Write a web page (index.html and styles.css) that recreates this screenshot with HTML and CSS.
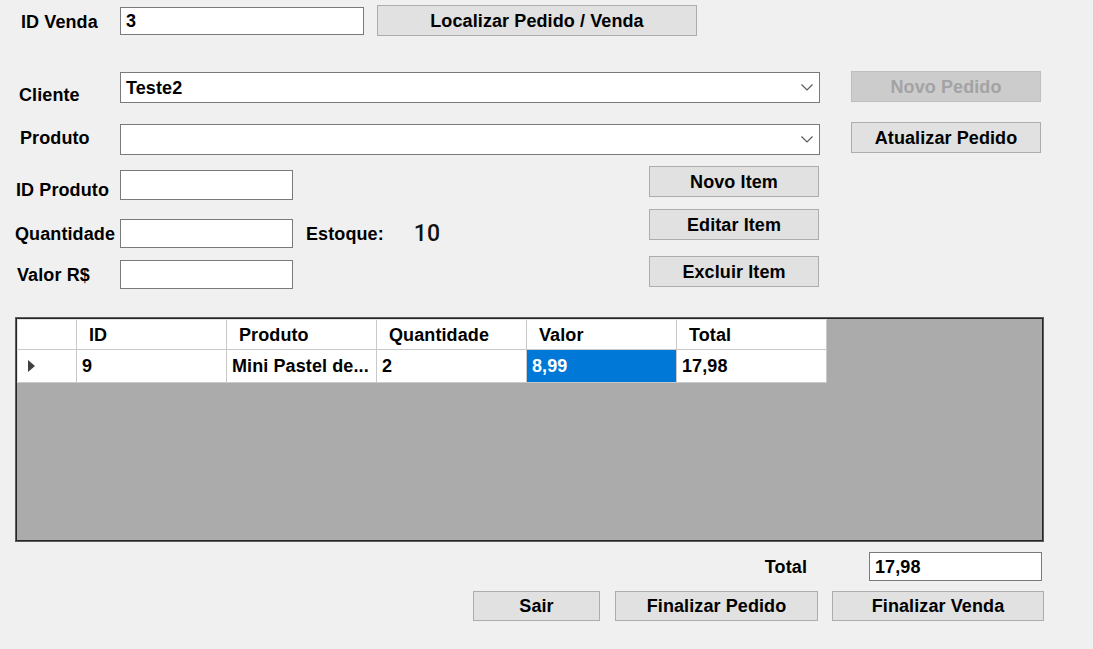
FILE: index.html
```html
<!DOCTYPE html>
<html lang="pt-BR">
<head>
<meta charset="utf-8">
<title>Pedido / Venda</title>
<link rel="stylesheet" href="styles.css">
</head>
<body>
<div class="form">
  <div class="row row-venda">
    <span class="lbl lbl-venda">ID Venda</span>
    <div class="tb tb-venda">3</div>
    <button class="btn btn-localizar">Localizar Pedido / Venda</button>
  </div>

  <div class="row row-cliente">
    <span class="lbl lbl-cliente">Cliente</span>
    <div class="combo combo-cliente">
      <span class="combo-text">Teste2</span>
      <svg class="chev" viewBox="0 0 12 7" width="12" height="7"><polyline points="0.5,0.5 6,6 11.5,0.5" fill="none" stroke="#5a5a5a" stroke-width="1.2"/></svg>
    </div>
    <button class="btn btn-side" disabled>Novo Pedido</button>
  </div>

  <div class="row row-produto">
    <span class="lbl lbl-produto">Produto</span>
    <div class="combo combo-produto">
      <span class="combo-text"></span>
      <svg class="chev" viewBox="0 0 12 7" width="12" height="7"><polyline points="0.5,0.5 6,6 11.5,0.5" fill="none" stroke="#5a5a5a" stroke-width="1.2"/></svg>
    </div>
    <button class="btn btn-side">Atualizar Pedido</button>
  </div>

  <div class="mid">
    <div class="fields">
      <div class="field f-idprod">
        <span class="lbl lbl-idprod">ID Produto</span>
        <div class="tb tb-small tb-idprod"></div>
      </div>
      <div class="field f-qtd">
        <span class="lbl lbl-qtd">Quantidade</span>
        <div class="tb tb-small"></div>
        <span class="estoque">Estoque:</span>
        <span class="estoque-val">10</span>
      </div>
      <div class="field f-valor">
        <span class="lbl lbl-valor">Valor R$</span>
        <div class="tb tb-small"></div>
      </div>
    </div>
    <div class="item-btns">
      <button class="btn btn-item">Novo Item</button>
      <button class="btn btn-item btn-editar">Editar Item</button>
      <button class="btn btn-item btn-excluir">Excluir Item</button>
    </div>
  </div>

  <div class="grid">
    <table class="dgv">
      <thead>
        <tr>
          <th class="rh"></th>
          <th class="col">ID</th>
          <th class="col">Produto</th>
          <th class="col">Quantidade</th>
          <th class="col">Valor</th>
          <th class="col">Total</th>
        </tr>
      </thead>
      <tbody>
        <tr>
          <td class="rh"><span class="arrow"></span></td>
          <td>9</td>
          <td>Mini Pastel de...</td>
          <td>2</td>
          <td class="sel">8,99</td>
          <td>17,98</td>
        </tr>
      </tbody>
    </table>
  </div>

  <div class="total-row">
    <span class="total-lbl">Total</span>
    <div class="tb tb-total">17,98</div>
  </div>

  <div class="actions">
    <button class="btn btn-sair">Sair</button>
    <button class="btn btn-fped">Finalizar Pedido</button>
    <button class="btn btn-fvenda">Finalizar Venda</button>
  </div>
</div>
</body>
</html>
```

FILE: styles.css
```css
* { box-sizing: border-box; }

body {
  margin: 0;
  width: 1093px;
  height: 649px;
  overflow: hidden;
  background: #f0f0f0;
  font-family: "Liberation Sans", Arial, sans-serif;
  font-weight: 700;
  font-size: 18px;
  letter-spacing: 0.1px;
  color: #000;
}

.row { display: flex; align-items: flex-start; }

.lbl {
  width: 120px;
  flex: none;
  line-height: 20px;
  white-space: nowrap;
}

.tb {
  background: #fff;
  border: 1px solid #7a7a7a;
  padding-left: 5px;
  display: flex;
  align-items: center;
  line-height: 20px;
  flex: none;
}

.btn {
  font: inherit;
  letter-spacing: inherit;
  color: #000;
  background: #e1e1e1;
  border: 1px solid #adadad;
  padding: 0;
  margin: 0;
  display: flex;
  align-items: center;
  justify-content: center;
  flex: none;
  line-height: 20px;
}
.btn:disabled {
  background: #cccccc;
  border-color: #bfbfbf;
  color: #a3a3a3;
}

/* Row 1 */
.row-venda { padding-top: 5px; height: 36px; }
.lbl-venda { padding-left: 21px; margin-top: 7px; }
.tb-venda { width: 244px; height: 28px; margin-top: 2px; }
.btn-localizar { width: 320px; height: 31px; margin-left: 13px; }

/* Combo rows */
.combo {
  width: 700px;
  height: 31px;
  background: #fff;
  border: 1px solid #7a7a7a;
  display: flex;
  align-items: center;
  padding: 0 6px 0 5px;
  flex: none;
  line-height: 20px;
}
.combo-text { flex: 1; }
.chev { display: block; flex: none; }

.btn-side { width: 190px; height: 31px; margin-left: 31px; }

.row-cliente { margin-top: 35px; height: 32px; }
.lbl-cliente { padding-left: 19px; margin-top: 14px; }
.combo-cliente { margin-top: 1px; }

.row-produto { margin-top: 19px; height: 33px; }
.lbl-produto { padding-left: 20px; margin-top: 6px; }
.combo-produto { margin-top: 2px; }

/* Middle section */
.mid { display: flex; margin-top: 11px; height: 123px; }
.fields { width: 649px; flex: none; }
.field { display: flex; align-items: center; }
.tb-small { width: 173px; height: 29px; }
.tb-idprod { height: 30px; }

.f-idprod { margin-top: 4px; }
.lbl-idprod { padding-left: 16px; align-self: flex-end; }
.f-qtd { margin-top: 19px; }
.lbl-qtd { padding-left: 15px; }
.f-valor { margin-top: 12px; }
.lbl-valor { padding-left: 17px; }

.estoque { margin-left: 13px; line-height: 20px; }
.estoque-val {
  margin-left: 30px;
  font-family: Roboto, "Liberation Sans", sans-serif;
  font-size: 23px;
  font-weight: 500;
  letter-spacing: 0;
  line-height: 26px;
  color: #111;
}

.item-btns { display: flex; flex-direction: column; }
.btn-item { width: 170px; height: 31px; }
.btn-editar { margin-top: 12px; }
.btn-excluir { margin-top: 16px; }

/* Data grid */
.grid {
  margin: 28px 0 0 15px;
  width: 1029px;
  height: 225px;
  background: #ababab;
  border: 1px solid #5c5c5c;
  box-shadow: inset 0 0 0 1px #262626;
  padding: 1px 0 0 1px;
}
.dgv {
  border-collapse: separate;
  border-spacing: 0;
  table-layout: fixed;
  width: 810px;
  border-top: 1px solid #e3e3e3;
  border-left: 1px solid #e3e3e3;
}
.dgv th, .dgv td {
  background: #fff;
  border-right: 1px solid #c9c9c9;
  border-bottom: 1px solid #c9c9c9;
  text-align: left;
  white-space: nowrap;
  overflow: hidden;
  line-height: 20px;
  font-weight: 700;
}
.dgv th { height: 30px; padding: 0 0 0 12px; }
.dgv th.rh { width: 59px; padding: 0; }
.dgv th.col { width: 150px; }
.dgv td { height: 33px; padding: 0 0 0 5px; }
.dgv td.rh { padding-left: 10px; }
.dgv td.sel { background: #0078d7; color: #fff; }

.arrow {
  display: block;
  width: 0;
  height: 0;
  border-left: 7px solid #404040;
  border-top: 6px solid transparent;
  border-bottom: 6px solid transparent;
}

/* Total */
.total-row {
  display: flex;
  justify-content: flex-end;
  align-items: center;
  margin-top: 10px;
  padding-right: 51px;
}
.total-lbl { margin-right: 62px; line-height: 20px; }
.tb-total { width: 173px; height: 29px; }

/* Action buttons */
.actions {
  display: flex;
  justify-content: flex-end;
  margin-top: 10px;
  padding-right: 49px;
}
.actions .btn { height: 30px; }
.btn-sair { width: 127px; margin-right: 15px; }
.btn-fped { width: 203px; margin-right: 14px; }
.btn-fvenda { width: 212px; }
```
